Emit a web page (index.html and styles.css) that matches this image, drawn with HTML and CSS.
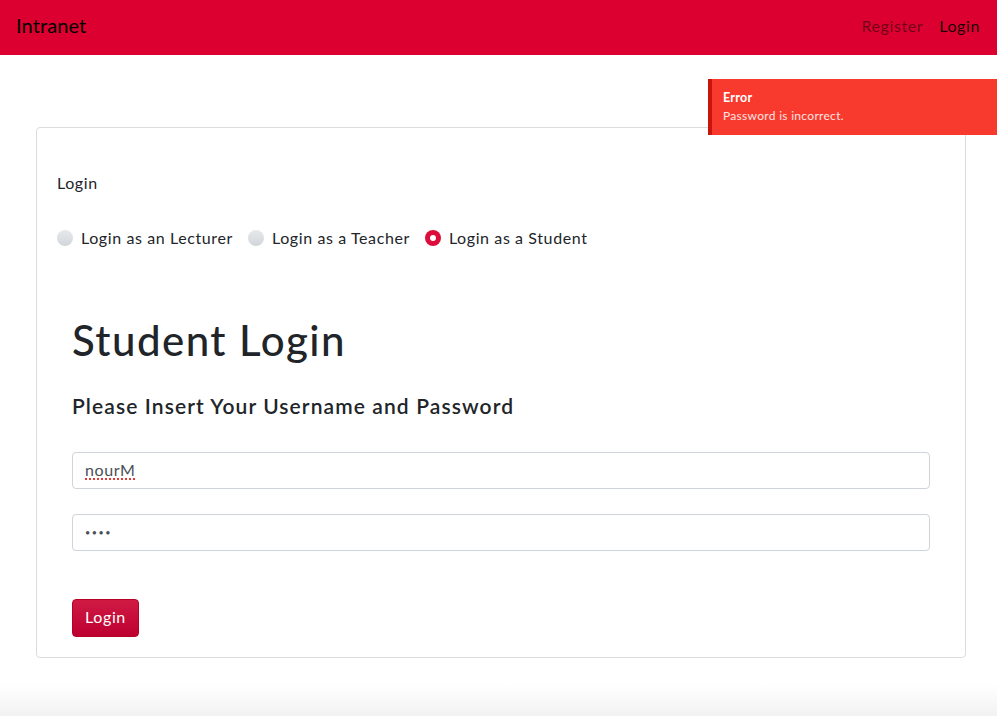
FILE: index.html
```html
<!DOCTYPE html>
<html lang="en">
<head>
<meta charset="utf-8">
<title>Intranet</title>
<link rel="stylesheet" href="styles.css">
</head>
<body>
<nav class="navbar">
  <a class="brand" href="#">Intranet</a>
  <div class="nav-links">
    <a class="nav-link muted" href="#">Register</a>
    <a class="nav-link active" href="#">Login</a>
  </div>
</nav>

<div class="toast">
  <div class="toast-title">Error</div>
  <div class="toast-msg">Password is incorrect.</div>
</div>

<main class="page">
  <section class="card">
    <div class="card-title">Login</div>
    <div class="radios">
      <label class="radio"><span class="dot"></span>Login as an Lecturer</label>
      <label class="radio"><span class="dot"></span>Login as a Teacher</label>
      <label class="radio"><span class="dot checked"></span>Login as a Student</label>
    </div>
    <form class="form">
      <h1 class="title">Student Login</h1>
      <h4 class="subtitle">Please Insert Your Username and Password</h4>
      <div class="field"><span class="spell">nourM</span></div>
      <div class="field pw">&bull;&bull;&bull;&bull;</div>
      <button class="btn" type="button">Login</button>
    </form>
  </section>
</main>
</body>
</html>
```
FILE: styles.css
```css
* { box-sizing: border-box; }
html, body { margin: 0; padding: 0; }
body {
  font-family: Lato, "Open Sans", sans-serif;
  font-size: 16px;
  line-height: 1.5;
  letter-spacing: 0.6px;
  color: #212529;
  min-height: 716px;
  background: linear-gradient(to bottom, #fff 0, #fff 684px, #f2f2f2 716px);
}
.navbar {
  height: 55px;
  background: #dc0030;
  display: flex;
  align-items: center;
  justify-content: space-between;
  padding: 0 17px 5px 16px;
}
.brand {
  font-size: 20px;
  letter-spacing: 0.1px;
  color: #000;
  text-decoration: none;
}
.nav-links { display: flex; gap: 16px; padding-top: 1px; }
.nav-link { text-decoration: none; font-size: 16px; }
.nav-link.muted { color: rgba(0,0,0,0.5); }
.nav-link.active { color: rgba(0,0,0,0.9); }

.toast {
  position: absolute;
  top: 79px;
  right: 0;
  width: 289px;
  height: 56px;
  background: #f83a2e;
  border-left: 4px solid #c8140a;
  color: #fff;
  padding: 10px 11px;
  font-size: 12px;
  line-height: 18px;
  letter-spacing: 0.3px;
}
.toast-title { font-weight: 700; font-size: 12.5px; }
.toast-msg { color: #ffe5e2; }

.page { padding: 72px 31px 0 36px; }
.card {
  border: 1px solid #dcdcdc;
  border-radius: 4px;
  padding: 43px 20px 20px 20px;
}
.card-title { line-height: 24px; }
.radios {
  display: flex;
  gap: 15px;
  margin-top: 31px;
  line-height: 24px;
  letter-spacing: 0.6px;
}
.radio { display: flex; align-items: center; gap: 8px; }
.dot {
  width: 16px; height: 16px; border-radius: 50%;
  background: linear-gradient(to bottom, #e6e9ec, #d2d6da);
  position: relative;
}
.dot.checked { background: #dc0d3a; }
.dot.checked::after {
  content: "";
  position: absolute;
  left: 5px; top: 5px;
  width: 6px; height: 6px; border-radius: 50%;
  background: #fff;
}
.form { padding: 0 15px; margin-top: 66px; }
.title {
  margin: 0;
  font-size: 42px;
  font-weight: 500;
  line-height: 48px;
  letter-spacing: 1.45px;
}
.subtitle {
  margin: 30px 0 0;
  font-size: 21px;
  font-weight: 600;
  line-height: 24px;
  letter-spacing: 1.1px;
}
.field {
  height: 37px;
  border: 1px solid #ced4da;
  border-radius: 4px;
  padding: 5px 12px;
  color: #495057;
  margin-top: 34px;
}
.field + .field { margin-top: 25px; }
.spell {
  text-decoration: underline dotted #e53935;
  text-decoration-thickness: 2px;
  text-underline-offset: 2px;
}
.pw { font-size: 9px; line-height: 26px; letter-spacing: 1.5px; }
.btn {
  display: block;
  margin-top: 48px;
  width: 67px;
  height: 38px;
  border: 1px solid #b5002a;
  border-radius: 4px;
  background: linear-gradient(to bottom, #d01a44, #bd0030);
  color: #fff;
  font-family: inherit;
  font-size: 16px;
  letter-spacing: 0.6px;
  padding: 0 0 3px;
}
```
